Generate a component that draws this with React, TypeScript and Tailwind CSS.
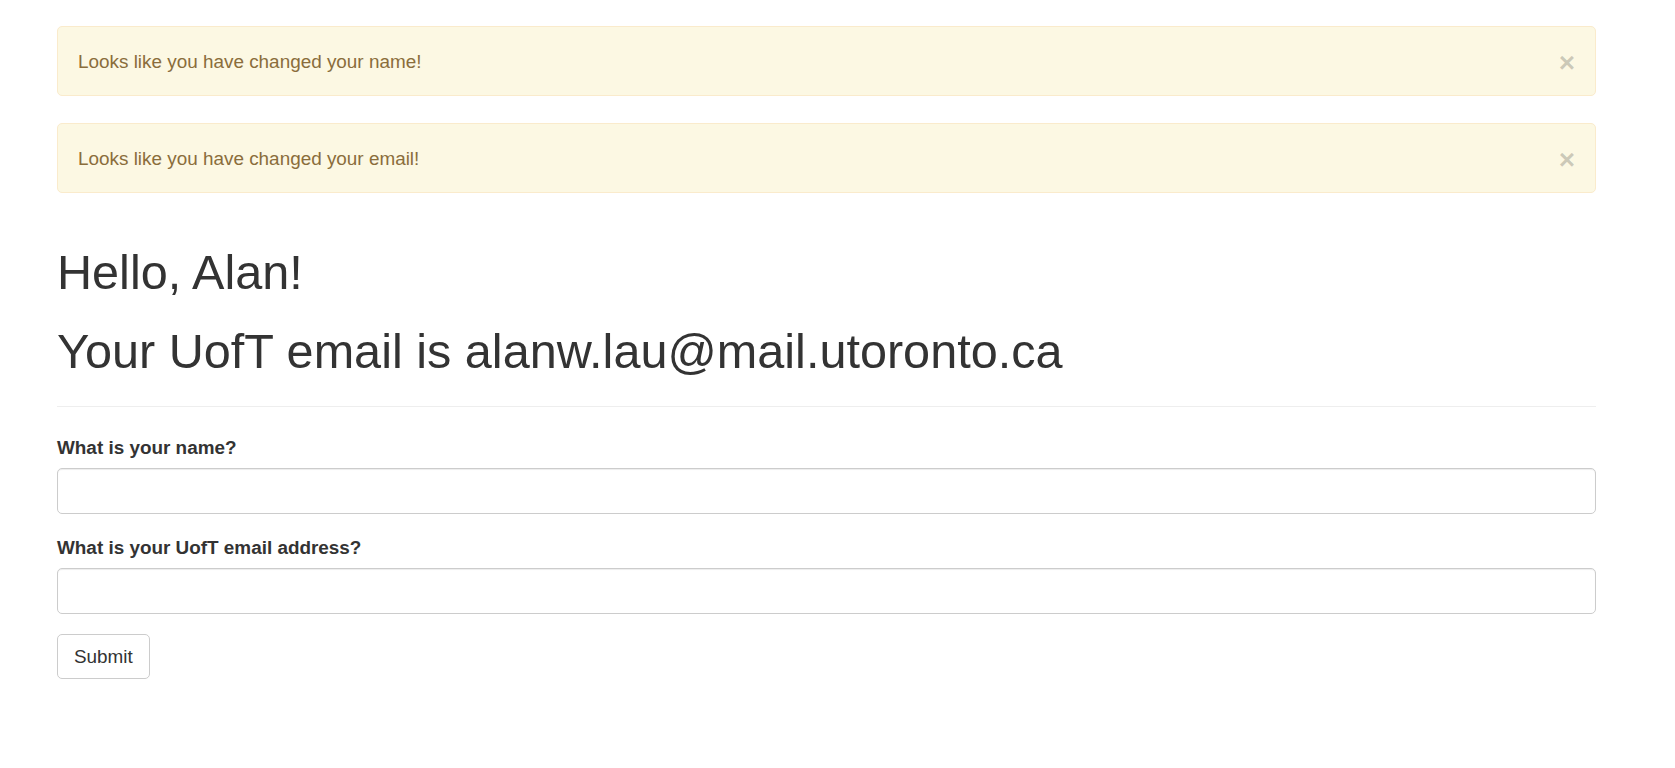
import React from "react";

const alerts = ["Looks like you have changed your name!", "Looks like you have changed your email!"];

const fields = [
  { id: "name", label: "What is your name?" },
  { id: "email", label: "What is your UofT email address?" }
];

const App = () => (
  <div className="min-h-screen bg-white pt-[26px] pl-[57px] pr-[79px] font-['Liberation_Sans',Arial,sans-serif] text-[18.9px] leading-[27px] text-[#333]">
    {alerts.map((msg, idx) => (
      <div
        key={idx}
        className="mb-[27px] flex items-center justify-between rounded-[5px] border border-[#faebcc] bg-[#fcf8e3] py-[20px] pl-[20px] pr-[20px] text-[#8a6d3b]"
      >
        <span>{msg}</span>
        <button className="relative top-[2px] text-[28px] font-bold leading-none text-black/20">×</button>
      </div>
    ))}
    <div className="pt-[26px]">
      <h1 className="mb-[26px] text-[48.6px] font-normal leading-[1.1]">Hello, Alan!</h1>
      <h1 className="text-[48.6px] font-normal leading-[1.1]">Your UofT email is alanw.lau@mail.utoronto.ca</h1>
      <hr className="my-[27px] border-t border-[#eee]" />
      <form>
        {fields.map((f) => (
          <div key={f.id} className="mb-[20px]">
            <label htmlFor={f.id} className="mb-[7px] inline-block font-bold">
              {f.label}
            </label>
            <input
              id={f.id}
              type="text"
              className="block h-[46px] w-full rounded-[5px] border border-[#ccc] bg-white px-[16px] shadow-[inset_0_1px_1px_rgba(0,0,0,0.075)] outline-none"
            />
          </div>
        ))}
        <button
          type="submit"
          className="h-[45px] rounded-[5px] border border-[#ccc] bg-white px-[16px] text-[#333]"
        >
          Submit
        </button>
      </form>
    </div>
  </div>
);

export default App;
